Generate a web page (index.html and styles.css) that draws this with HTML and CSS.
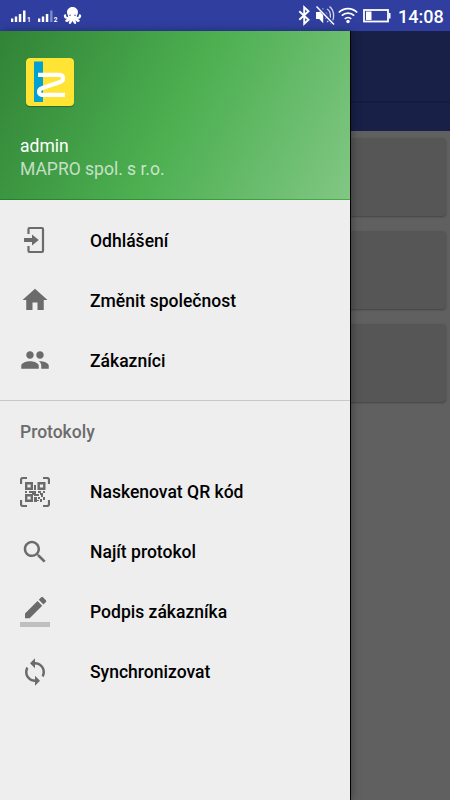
FILE: index.html
```html
<!DOCTYPE html>
<html lang="cs">
<head>
<meta charset="utf-8">
<title>Protokoly</title>
<link rel="stylesheet" href="styles.css">
</head>
<body>
<div class="screen">
  <header class="status">
    <svg class="status-left" width="90" height="31" viewBox="0 0 90 31" fill="#fff">
      <path d="M11 18.500h2.300V22H11zM14.800 16.500h2.400V22h-2.400zM18.800 14h2.500v8h-2.500zM23 10.500h2.500V22H23z"/>
      <path d="M38 18.500h2.300V22H38zM41.800 16.500h2.400V22h-2.400zM45.800 14h2.500v8h-2.500z"/>
      <path d="M50.200 10.500h2.300V22h-2.300z" opacity=".4"/>
      <text class="sim" x="27" y="22">1</text><text class="sim" x="53.700" y="22">2</text>
      <path d="M72.500 7c-3.600 0-5.500 2.600-5.500 5.300 0 2 1.300 3.100 1.200 4.200-.2.800-1.800.3-2-.6-.1-.7.200-1.500-.7-1.700-1.200-.2-1.900.9-1.600 2.200.3 1.500 1.700 2.600 3.300 2.400-.5.900-1.800.8-2 1.800-.2 1.300 1.400 1.800 2.600 1.200.8-.4 1.300-1 1.700-1.500.1 1.100-1 1.800-.7 3 .3 1.200 1.900 1 2.500-.2.300-.6.700-1.300 1.200-2 .5.700.9 1.400 1.200 2 .6 1.200 2.200 1.400 2.500.2.300-1.200-.8-1.900-.7-3 .4.500.9 1.100 1.700 1.500 1.200.6 2.800.1 2.600-1.200-.2-1-1.500-.9-2-1.800 1.600.2 3-.9 3.300-2.400.3-1.300-.4-2.400-1.600-2.200-.9.200-.6 1-.7 1.700-.2.900-1.800 1.400-2 .6-.1-1.100 1.200-2.200 1.200-4.200C78 9.600 76.100 7 72.500 7z"/>
      <circle cx="70" cy="15.200" r=".7" fill="#303f9f"/><circle cx="75" cy="15.200" r=".7" fill="#303f9f"/>
    </svg>
    <div class="status-right">
      <svg width="96" height="31" viewBox="296 0 96 31" fill="none" stroke="#fff">
        <path d="M299.300 11.200l9.200 8.600-4.300 4V7.200l4.300 4-9.200 8.600" stroke-width="1.900"/>
        <path d="M316 12h3.200l4-4.200v15.400l-4-4.200H316z" fill="#fff" stroke="none"/>
        <path d="M325.500 12.500c1.800 1.500 1.800 4.500 0 6M327 9c4.500 2.500 4.500 10.500 0 13M329.500 6.500c5.600 4.500 5 13.500 1 17" stroke-width="1.300" opacity=".8"/>
        <path d="M317.500 6l16.500 18.500" stroke="#303f9f" stroke-width="3.500"/>
        <path d="M316.500 6.500l17.500 18" stroke-width="1.500"/>
        <path d="M338.800 12.500c5.300-5.200 13.100-5.200 18.400 0M341.800 15.700c3.500-3.500 8.900-3.500 12.400 0M344.800 18.800c1.800-1.700 4.600-1.700 6.400 0" stroke-width="1.700"/>
        <circle cx="348" cy="21.500" r="1.700" fill="#fff" stroke="none"/>
        <rect x="364" y="10" width="24" height="11.500" stroke-width="1.800"/>
        <path d="M366 11.500h5.500V20H366zM389 13h1.500v5.500H389z" fill="#fff" stroke="none"/>
      </svg>
      <time class="clock">14:08</time>
    </div>
  </header>

  <main class="app">
    <div class="toolbar"></div>
    <div class="tabs"></div>
    <div class="cards">
      <div class="card"></div>
      <div class="card"></div>
      <div class="card"></div>
    </div>
  </main>

  <aside class="drawer">
    <div class="profile">
      <svg class="logo" width="48" height="48" viewBox="0 0 48 48">
        <rect width="48" height="48" rx="3.500" fill="#ffe433"/>
        <path d="M8 3.500h9V44H8z" fill="#03a1d0"/>
        <path d="M12 16.800h21C38 16.800 38.500 22.300 34 24L16.500 30C11.500 31.700 12 36.900 17 36.900H39" fill="none" stroke="#fff" stroke-width="4.200"/>
      </svg>
      <div class="name">admin</div>
      <div class="company">MAPRO spol. s r.o.</div>
    </div>
    <nav class="menu account">
      <a class="item">
        <svg class="icon" viewBox="0 0 30 30"><path d="M8.500 9V4q0-1 1-1H22q1 0 1 1v22q0 1-1 1H9.500q-1 0-1-1v-5" fill="none" stroke="currentColor" stroke-width="2.200"/><path d="M4 13h8V9.500l6.800 5.500-6.800 5.500V17H4z"/></svg>
        <span>Odhlášení</span>
      </a>
      <a class="item">
        <svg class="icon" viewBox="0 0 24 24"><path d="M10 20v-6h4v6h5v-8h3L12 3 2 12h3v8z"/></svg>
        <span>Změnit společnost</span>
      </a>
      <a class="item">
        <svg class="icon" viewBox="0 0 24 24"><path d="M16 11c1.660 0 2.990-1.340 2.990-3S17.660 5 16 5c-1.660 0-3 1.340-3 3s1.340 3 3 3zm-8 0c1.660 0 2.990-1.340 2.990-3S9.660 5 8 5C6.340 5 5 6.340 5 8s1.340 3 3 3zm0 2c-2.330 0-7 1.170-7 3.500V19h14v-2.500c0-2.330-4.670-3.500-7-3.500zm8 0c-.29 0-.62.020-.97.050 1.160.84 1.970 1.970 1.970 3.450V19h6v-2.500c0-2.330-4.670-3.500-7-3.500z"/></svg>
        <span>Zákazníci</span>
      </a>
    </nav>
    <section class="group">
      <h2 class="subheader">Protokoly</h2>
      <nav class="menu">
        <a class="item">
          <svg class="icon" viewBox="0 0 30 30"><path d="M1 7V3q0-2 2-2h4M23 1h4q2 0 2 2v4M29 23v4q0 2-2 2h-4M7 29H3q-2 0-2-2v-4" fill="none" stroke="currentColor" stroke-width="2.200"/><path d="M6.200 6.200h5.600v5.600H6.200zM18.700 6.200h5.600v5.600h-5.600zM6.200 18.200h5.600v5.600H6.200z" fill="none" stroke="currentColor" stroke-width="2.400"/><path d="M14 8h2v5h-2zM5 14h2v2H5zM9 14h7v2H9zM18 14h3v2h-3zM23 14h2v2h-2zM12 16h4v3h-2v-1h-2zM16 17h3v2h-3zM20 16h3v2h-3zM14 20h3v5h-3zM18 20h2v2h-2zM21 18h2v2h-2zM23 20h2v3h-2zM20 22h2v3h-2zM17 23h2v1h-2z"/></svg>
          <span>Naskenovat QR kód</span>
        </a>
        <a class="item">
          <svg class="icon" viewBox="0 0 24 24"><path d="M15.500 14h-.79l-.28-.27C15.410 12.590 16 11.110 16 9.500 16 5.910 13.090 3 9.500 3S3 5.910 3 9.500 5.910 16 9.500 16c1.610 0 3.090-.59 4.230-1.570l.27.28v.79l5 4.990L20.490 19l-4.990-5zm-6 0C7.010 14 5 11.990 5 9.500S7.010 5 9.500 5 14 7.010 14 9.500 11.990 14 9.500 14z"/></svg>
          <span>Najít protokol</span>
        </a>
        <a class="item">
          <svg class="icon" viewBox="0 0 24 24"><path d="M17.750 7L14 3.250l-10 10V17h3.750l10-10zm2.960-2.960c.39-.39.39-1.020 0-1.410L18.370.29c-.39-.39-1.020-.39-1.410 0L15 2.250 18.750 6l1.960-1.960z"/><path d="M0 20h24v4H0z" opacity=".36"/></svg>
          <span>Podpis zákazníka</span>
        </a>
        <a class="item">
          <svg class="icon" viewBox="0 0 24 24"><path d="M12 4V1L8 5l4 4V6c3.310 0 6 2.690 6 6 0 1.010-.25 1.970-.7 2.800l1.460 1.460C19.540 15.030 20 13.570 20 12c0-4.420-3.580-8-8-8zm0 14c-3.310 0-6-2.690-6-6 0-1.010.25-1.970.7-2.800L5.240 7.740C4.460 8.970 4 10.430 4 12c0 4.420 3.580 8 8 8v3l4-4-4-4v3z"/></svg>
          <span>Synchronizovat</span>
        </a>
      </nav>
    </section>
  </aside>
</div>
</body>
</html>
```

FILE: styles.css
```css
* { box-sizing: border-box; }
body { margin: 0; font-family: Roboto, "Noto Sans", sans-serif; }
svg { display: block; }
.screen { position: relative; width: 450px; height: 800px; display: flex; flex-direction: column; overflow: hidden; background: #606060; }
.status { flex: none; height: 31px; display: flex; justify-content: space-between; background: #303f9f; color: #fff; }
.sim { font-size: 6.500px; font-weight: 700; }
.status-right { display: flex; gap: 6px; padding-right: 6px; }
.clock { font-size: 18px; line-height: 33px; font-weight: 500; width: 46px; white-space: nowrap; }

.app { flex: 1; display: flex; flex-direction: column; }
.toolbar { height: 72px; background: #192048; border-bottom: 2px solid #151b3d; }
.tabs { height: 28px; background: #192048; }
.cards { display: flex; flex-direction: column; gap: 15px; padding: 7px 4px 0; }
.card { height: 78px; border-radius: 4px; background: #565656; box-shadow: 0 1px 2px rgba(0, 0, 0, .3); }

.drawer { position: absolute; top: 31px; left: 0; bottom: 0; width: 350px; background: #eee; box-shadow: 1px 0 0 #000, 2px 0 8px rgba(0, 0, 0, .35); }
.profile { height: 169px; padding: 27px 20px 0; background: linear-gradient(118deg, #318336, #4caf50 50%, #81c784); border-bottom: 1px solid rgba(0, 130, 0, .3); color: #fff; font-size: 17.500px; line-height: 24px; }
.logo { margin: 0 0 28px 6px; border-radius: 4px; box-shadow: 0 1px 1px rgba(0, 0, 0, .3); }
.name { height: 23px; }
.company { color: rgba(255, 255, 255, .7); }
.menu { display: flex; flex-direction: column; }
.account { padding: 10px 0; }
.account .item span { padding-top: 2px; }
.item { height: 60px; padding: 0 20px; display: flex; align-items: center; gap: 40px; font-size: 17.550px; font-weight: 500; color: #000; }
.icon { width: 30px; height: 30px; flex: none; color: #6b6b6b; fill: currentColor; }
.group { border-top: 1px solid #c8c8c8; }
.subheader { margin: 0; height: 61px; padding: 0 20px; font-size: 17.500px; line-height: 62px; font-weight: 500; color: #6b6b6b; }
```
